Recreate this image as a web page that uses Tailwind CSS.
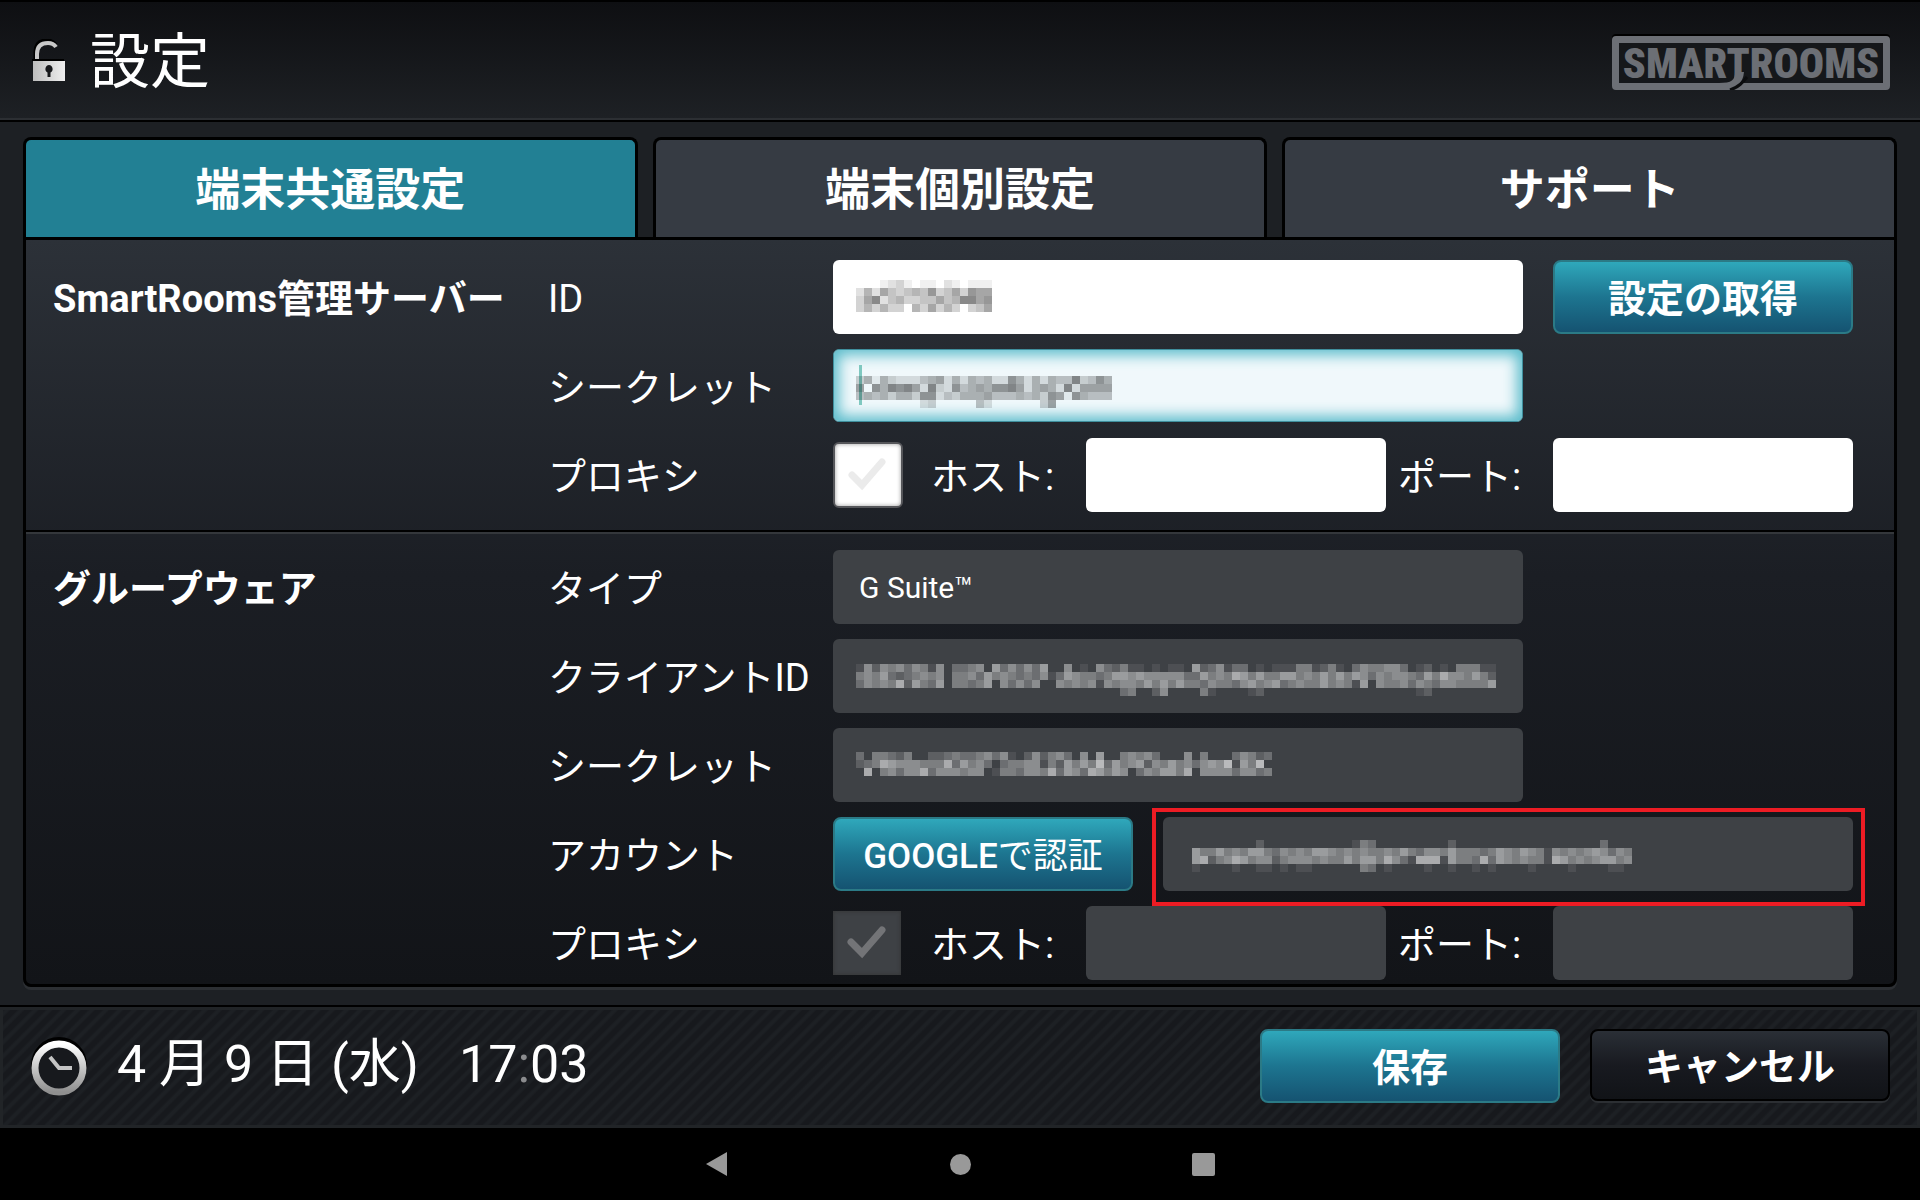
<!DOCTYPE html>
<html lang="ja">
<head>
<meta charset="utf-8">
<meta name="viewport" content="width=device-width, initial-scale=1">
<title>設定</title>
<script src="https://cdn.jsdelivr.net/npm/@tailwindcss/browser@4"></script>
</head>
<body class="flex min-h-screen flex-col bg-[#1d2024] font-[Roboto,'Noto_Sans_CJK_JP',sans-serif] text-[38px] leading-none text-white">

<header class="flex h-[122px] items-center justify-between border-y-2 border-black bg-linear-to-b from-[#0e0f12] to-[#1e2125] pr-[30px] pl-8 shadow-[inset_0_-2px_#2c2f33]">
  <h1 class="flex items-center gap-6 pt-1 text-[60px]">
    <svg class="h-[48px] w-[34px]" viewBox="0 0 34 48" aria-hidden="true">
      <defs><linearGradient id="metal" x1="0" x2="1"><stop offset="0" stop-color="#bdbdbd"/><stop offset="1" stop-color="#efefef"/></linearGradient></defs>
      <path d="M5 22V15C5 7 9 4 16 4C20 4 22 5 24 8" fill="none" stroke="#000" stroke-width="5" transform="translate(-1 -2)"/>
      <path d="M5 24V15C5 7 9 4 16 4C20 4 22 5 24 8" fill="none" stroke="#c8c8c8" stroke-width="4"/>
      <path d="M0 20H32V22H0Z" fill="#000"/>
      <path d="M1 22H33V42H1Z" fill="url(#metal)"/>
      <path d="M17 26a4 4 0 0 1 1.500 7.500V38H15.500V33.500A4 4 0 0 1 17 26Z" fill="#17181b"/>
    </svg>
    設定
  </h1>
  <div class="relative mt-1 flex h-[54px] w-[278px] items-center justify-center rounded-sm border-[7px] border-[#6c6f75] bg-[#15171a] pt-px font-['Roboto_Condensed',Roboto,sans-serif] text-[42px] font-black text-[#6c6f75] shadow-[0_-2px_#000]">
    SMARTROOMS
    <svg class="absolute -bottom-[7px] left-[100px] h-[18px] w-8" viewBox="0 0 32 18" aria-hidden="true"><path d="M0 18H6C18 17 24 11 25 0H16C16 8 13 11 0 11Z" fill="#6c6f75"/><path d="M11 18C20 15 24 10 28 5" fill="none" stroke="#0b0c0e" stroke-width="3"/></svg>
  </div>
</header>

<main class="px-[23px] pt-[15px] pb-[18px]">
  <div class="grid grid-cols-3 gap-[15px] text-[45px] font-bold" role="tablist">
    <button role="tab" aria-selected="true" class="h-[100px] rounded-t-lg border-x-3 border-t-3 border-black bg-[#228094] pt-1">端末共通設定</button>
    <button role="tab" aria-selected="false" class="h-[100px] rounded-t-lg border-x-3 border-t-3 border-black bg-[#363b43] pt-1">端末個別設定</button>
    <button role="tab" aria-selected="false" class="h-[100px] rounded-t-lg border-x-3 border-t-3 border-black bg-[#363b43] pt-1">サポート</button>
  </div>

  <div class="rounded-b-lg border-3 border-black bg-linear-to-b from-[#2c3138] via-[#1b1e24] via-45% to-[#121418] shadow-[0_3px_#2c2f33]" role="tabpanel">
    <section class="flex border-b-2 border-black pt-5 pr-[41px] pb-[18px] pl-[27px]">
      <h2 class="flex h-[74px] w-[495px] shrink-0 items-center pt-1 font-bold">SmartRooms管理サーバー</h2>
      <div class="flex flex-1 flex-col gap-[15px]">
        <div class="flex h-[74px] items-center">
          <label for="sid" class="w-[285px] shrink-0 pt-1">ID</label>
          <div class="grid h-full flex-1 grid-cols-[690fr_300fr] gap-[30px]">
            <div class="relative">
              <input id="sid" type="text" class="h-full w-full rounded-md bg-white px-6 text-[30px] text-black">
              <svg class="pointer-events-none absolute top-5 left-[23px]" data-tone="#000" data-rows="00012310110210111 25264345473463766 36824533446458867 35353305363530346" aria-hidden="true"></svg>
            </div>
            <button class="rounded-lg border-2 border-[#2b7a86] bg-linear-to-b from-[#2fa8bb] via-[#1d7590] to-[#155371] pt-1 font-bold">設定の取得</button>
          </div>
        </div>
        <div class="flex h-[74px] items-center">
          <label for="ssecret" class="w-[285px] shrink-0 pt-1">シークレット</label>
          <div class="grid h-full flex-1 grid-cols-[690fr_300fr] gap-[30px]">
            <div class="relative">
              <input id="ssecret" type="text" class="h-[73px] w-full rounded-md border border-[#3f8f9d] bg-[#f0f8fb] px-6 text-[30px] text-black shadow-[inset_0_0_14px_5px_#5bbccb]">
              <div class="absolute top-4 left-[26px] h-10 w-[3px] bg-[#7fc8c0]"></div>
              <svg class="pointer-events-none absolute top-[27px] left-[23px]" data-tone="#000" data-rows="35153222456252545227525254483475 60758786283274565778625652826666 45453553772435556444545376175444 00000000230000042000000360000000" aria-hidden="true"></svg>
            </div>
          </div>
        </div>
        <div class="flex h-[74px] items-center">
          <span class="w-[285px] shrink-0 pt-1">プロキシ</span>
          <div class="grid h-full flex-1 grid-cols-[253fr_300fr_167fr_300fr] items-center">
            <div class="flex items-center gap-7">
              <label class="relative block h-[66px] w-[70px]" aria-label="プロキシ">
                <input type="checkbox" class="block h-full w-full appearance-none rounded-md border-2 border-[#55565a] bg-white shadow-[inset_0_0_4px_#999]">
                <svg class="pointer-events-none absolute inset-0" viewBox="0 0 70 66" aria-hidden="true"><path d="M19 33L29 43L49 20" fill="none" stroke="#ebebeb" stroke-width="7" stroke-linecap="round"/></svg>
              </label>
              <label for="shost" class="pt-1 whitespace-nowrap">ホスト:</label>
            </div>
            <input id="shost" type="text" class="h-full w-full rounded-md bg-white px-6 text-[30px] text-black">
            <label for="sport" class="pt-1 pl-3 whitespace-nowrap">ポート:</label>
            <input id="sport" type="text" class="h-full w-full rounded-md bg-white px-6 text-[30px] text-black">
          </div>
        </div>
      </div>
    </section>

    <section class="flex border-t-2 border-[#34373b] pt-4 pr-[41px] pb-1 pl-[27px]">
      <h2 class="flex h-[74px] w-[495px] shrink-0 items-center pt-1 font-bold">グループウェア</h2>
      <div class="flex flex-1 flex-col gap-[15px]">
        <div class="flex h-[74px] items-center">
          <label for="gtype" class="w-[285px] shrink-0 pt-1">タイプ</label>
          <div class="grid h-full flex-1 grid-cols-[690fr_300fr] gap-[30px]">
            <input id="gtype" type="text" readonly value="G Suite™" class="w-full rounded-md bg-[#3e4145] px-[26px] text-[30px]">
          </div>
        </div>
        <div class="flex h-[74px] items-center">
          <label for="gclient" class="w-[285px] shrink-0 pt-1 whitespace-nowrap">クライアントID</label>
          <div class="grid h-full flex-1 grid-cols-[690fr_300fr] gap-[30px]">
            <div class="relative">
              <input id="gclient" type="text" readonly class="h-full w-full rounded-md bg-[#3e4145] px-[26px] text-[30px]">
              <svg class="pointer-events-none absolute top-[25px] left-[23px]" data-tone="#fff" data-rows="15254535415033450635353600501053241101011062351330101114412410354455301201044411 45463234545044536454343513654434665655555336454764644664546464653545543647554642 35454726436044346053535005454515455464646443544356456345446454160544535435544446 00000000000000000000000000000000034002500004100001200000000000000000001200000000" aria-hidden="true"></svg>
            </div>
          </div>
        </div>
        <div class="flex h-[74px] items-center">
          <label for="gsecret" class="w-[285px] shrink-0 pt-1">シークレット</label>
          <div class="grid h-full flex-1 grid-cols-[690fr_300fr] gap-[30px]">
            <div class="relative">
              <input id="gsecret" type="text" readonly class="h-full w-full rounded-md bg-[#3e4145] px-[26px] text-[30px]">
              <svg class="pointer-events-none absolute top-6 left-[23px]" data-tone="#fff" data-rows="3044324002234334535102524530506004545300050400035423 2347655544473645303445514264648364562546453565816480 0704535573555455014435547365376465035466470555535534" aria-hidden="true"></svg>
            </div>
          </div>
        </div>
        <div class="flex h-[74px] items-center">
          <label for="gaccount" class="w-[285px] shrink-0 pt-1">アカウント</label>
          <div class="grid h-full flex-1 grid-cols-[300fr_690fr] gap-[30px]">
            <button class="rounded-lg border-2 border-[#2b7a86] bg-linear-to-b from-[#2fa8bb] via-[#1d7590] to-[#155371] pt-1 text-[35px] font-medium whitespace-nowrap">GOOGLE<span class="font-normal">で認証</span></button>
            <div class="relative">
              <input id="gaccount" type="text" readonly class="h-full w-full rounded-md bg-[#3e4145] px-[26px] text-[30px]">
              <svg class="pointer-events-none absolute top-[23px] left-[29px]" data-tone="#fff" data-rows="0000000020000000000014300000000020000000000000000003000 6446454664354546654545445464355464443465465415454565354 6724576455245554544646647531777164437365454417645456645 1000010011010110000004301000010010010100001000010000110" aria-hidden="true"></svg>
              <div class="pointer-events-none absolute -top-[9px] -right-3 -bottom-[15px] -left-[11px] border-4 border-[#ed1c24]"></div>
            </div>
          </div>
        </div>
        <div class="flex h-[74px] items-center">
          <span class="w-[285px] shrink-0 pt-1">プロキシ</span>
          <div class="grid h-full flex-1 grid-cols-[253fr_300fr_167fr_300fr] items-center">
            <div class="flex items-center gap-7">
              <label class="relative block h-16 w-[70px] pr-[2px]" aria-label="プロキシ">
                <input type="checkbox" disabled class="block h-full w-full appearance-none bg-[#3e4145] shadow-[inset_0_0_4px_#333]">
                <svg class="pointer-events-none absolute inset-0" viewBox="0 0 70 66" aria-hidden="true"><path d="M18 31L29 42L49 19" fill="none" stroke="#737477" stroke-width="7" stroke-linecap="round"/></svg>
              </label>
              <label for="ghost" class="pt-1 whitespace-nowrap">ホスト:</label>
            </div>
            <input id="ghost" type="text" readonly class="h-full w-full rounded-md bg-[#3e4145] px-[26px] text-[30px]">
            <label for="gport" class="pt-1 pl-3 whitespace-nowrap">ポート:</label>
            <input id="gport" type="text" readonly class="h-full w-full rounded-md bg-[#3e4145] px-[26px] text-[30px]">
          </div>
        </div>
      </div>
    </section>
  </div>
</main>

<footer class="flex h-[123px] items-center justify-between border-t-2 border-black bg-[repeating-linear-gradient(135deg,#17191d_0px,#17191d_4px,#1d2024_6px,#1d2024_8px,#17191d_10px)] px-[30px] pb-1 shadow-[inset_0_0_0_3px_#212427]">
  <div class="flex items-center gap-[29px] text-[52px]">
    <svg class="h-[60px] w-[58px]" viewBox="0 0 58 60" aria-hidden="true">
      <defs><linearGradient id="ring" x2="0" y2="1"><stop offset="0" stop-color="#fff"/><stop offset="1" stop-color="#8f8f8f"/></linearGradient></defs>
      <circle cx="29" cy="29" r="24.500" fill="none" stroke="#000" stroke-width="7"/>
      <circle cx="29" cy="32" r="24" fill="#17191d" stroke="url(#ring)" stroke-width="7"/>
      <path d="M20 21L29 32H42" fill="none" stroke="#c4c4c4" stroke-width="4"/>
    </svg>
    <div class="flex gap-10 pb-px whitespace-nowrap"><span>4 月 9 日 (水)</span><time>17<span class="text-[#8b8c8e]">:</span>03</time></div>
  </div>
  <div class="flex gap-[30px]">
    <button class="h-[74px] w-[300px] rounded-lg border-2 border-[#2b7a86] bg-linear-to-b from-[#2fa8bb] via-[#1d7590] to-[#155371] pt-1 font-bold">保存</button>
    <button class="h-[72px] w-[300px] rounded-lg border-2 border-black bg-linear-to-b from-[#2a2f36] via-[#181a20] to-[#111317] pt-1 font-bold shadow-[0_2px_#2c2f33]">キャンセル</button>
  </div>
</footer>

<nav class="flex h-[72px] items-center justify-center gap-[203px] bg-black" aria-label="システム">
  <button class="flex h-10 w-10 items-center justify-center" aria-label="戻る"><svg class="h-6 w-[22px]" viewBox="0 0 22 24"><path d="M21 0V24L0 12Z" fill="#999"/></svg></button>
  <button class="flex h-10 w-10 items-center justify-center" aria-label="ホーム"><span class="h-[21px] w-[21px] rounded-full bg-[#999]"></span></button>
  <button class="flex h-10 w-10 items-center justify-center" aria-label="履歴"><span class="h-[23px] w-[23px] rounded-[2px] bg-[#999]"></span></button>
</nav>

<script>
// Masked values: each digit is the strength of one 8px square.
for (const svg of document.querySelectorAll('svg[data-rows]')) {
  const rows = svg.dataset.rows.split(' ');
  const step = svg.dataset.tone === '#000' ? 0.058 : 0.08;
  svg.setAttribute('width', rows[0].length * 8);
  svg.setAttribute('height', rows.length * 8);
  rows.forEach((row, y) => [...row].forEach((d, x) => {
    if (d === '0') return;
    const cell = document.createElementNS('http://www.w3.org/2000/svg', 'rect');
    cell.setAttribute('x', x * 8);
    cell.setAttribute('y', y * 8);
    cell.setAttribute('width', 8);
    cell.setAttribute('height', 8);
    cell.setAttribute('fill', svg.dataset.tone);
    cell.setAttribute('fill-opacity', d * step);
    svg.append(cell);
  }));
}
</script>
</body>
</html>
